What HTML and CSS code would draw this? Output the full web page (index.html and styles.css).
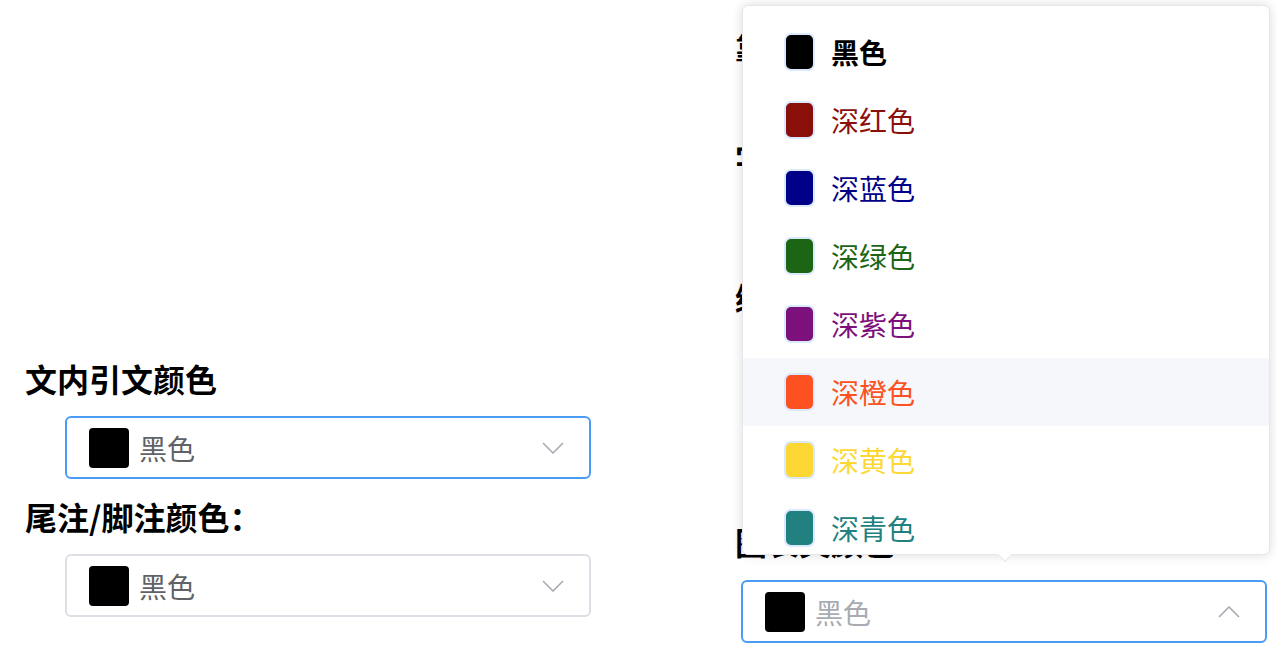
FILE: index.html
```html
<!DOCTYPE html>
<html lang="zh-CN">
<head>
<meta charset="utf-8">
<title>颜色设置</title>
<link rel="stylesheet" href="styles.css">
</head>
<body>
<div class="page">
  <div class="col col-left">
    <div class="field">
      <div class="label">文内引文颜色</div>
      <div class="select is-focus">
        <span class="swatch sw-black"></span>
        <span class="value">黑色</span>
        <svg class="caret" viewBox="0 0 22 12" width="22" height="12"><path d="M1 1 L11 11 L21 1"/></svg>
      </div>
    </div>
    <div class="field">
      <div class="label">尾注/脚注颜色：</div>
      <div class="select">
        <span class="swatch sw-black"></span>
        <span class="value">黑色</span>
        <svg class="caret" viewBox="0 0 22 12" width="22" height="12"><path d="M1 1 L11 11 L21 1"/></svg>
      </div>
    </div>
  </div>
  <div class="col col-right">
    <div class="field">
      <div class="label">靠左对齐</div>
      <div class="spacer spacer-a"></div>
    </div>
    <div class="field">
      <div class="label">字号大小</div>
      <div class="spacer spacer-b"></div>
    </div>
    <div class="field field-c">
      <div class="label">编号格式</div>
      <div class="spacer spacer-b"></div>
    </div>
    <div class="field">
      <div class="label">图表文颜色</div>
      <div class="select is-focus is-open">
        <span class="swatch sw-black"></span>
        <span class="value">黑色</span>
        <svg class="caret" viewBox="0 0 22 12" width="22" height="12"><path d="M1 11 L11 1 L21 11"/></svg>
      </div>
    </div>
  </div>
</div>

<div class="dropdown">
  <ul class="options">
    <li class="option selected"><span class="opt-swatch sw-black"></span><span class="opt-text c-black">黑色</span></li>
    <li class="option"><span class="opt-swatch sw-red"></span><span class="opt-text c-red">深红色</span></li>
    <li class="option"><span class="opt-swatch sw-blue"></span><span class="opt-text c-blue">深蓝色</span></li>
    <li class="option"><span class="opt-swatch sw-green"></span><span class="opt-text c-green">深绿色</span></li>
    <li class="option"><span class="opt-swatch sw-purple"></span><span class="opt-text c-purple">深紫色</span></li>
    <li class="option hover"><span class="opt-swatch sw-orange"></span><span class="opt-text c-orange">深橙色</span></li>
    <li class="option"><span class="opt-swatch sw-yellow"></span><span class="opt-text c-yellow">深黄色</span></li>
    <li class="option"><span class="opt-swatch sw-teal"></span><span class="opt-text c-teal">深青色</span></li>
  </ul>
  <span class="arrow"></span>
</div>
</body>
</html>
```

FILE: styles.css
```css
* { box-sizing: border-box; }
html, body { margin: 0; padding: 0; background: #fff; }
body {
  font-family: "Noto Sans CJK SC", "Noto Sans", sans-serif;
  color: #000;
  width: 1277px;
  height: 647px;
  overflow: hidden;
  position: relative;
}
.page {
  display: grid;
  grid-template-columns: 710px 542px;
  padding-left: 25px;
}
.col-left { padding-top: 358px; }
.col-right { padding-top: 27px; }

.field { margin-bottom: 17px; }
.spacer-a { height: 35px; }
.spacer-b { height: 63px; }
.field-c { margin-bottom: 122px; }

.label {
  font-size: 32px;
  font-weight: 700;
  line-height: 40px;
  height: 40px;
  white-space: nowrap;
  margin-bottom: 18px;
}

.select {
  margin-left: 40px;
  width: 526px;
  height: 63px;
  border: 2px solid #dcdfe6;
  border-radius: 6px;
  display: flex;
  align-items: center;
  padding: 0 25px 0 22px;
  background: #fff;
}
.col-right .label { margin-bottom: 19px; }
.col-right .select { margin-left: 6px; }
.select.is-focus { border-color: #4a9bf6; }
.swatch {
  width: 40px;
  height: 40px;
  border-radius: 4px;
  flex: none;
}
.value {
  margin-left: 10px;
  font-size: 28px;
  line-height: 40px;
  color: #606266;
  flex: 1;
}
.is-open .value { color: #a8abb2; }
.caret {
  flex: none;
  fill: none;
  stroke: #a8abb2;
  stroke-width: 1.6;
}

.sw-black { background: #000; }
.sw-red { background: #8a0f0b; }
.sw-blue { background: #000088; }
.sw-green { background: #1b6515; }
.sw-purple { background: #7c117c; }
.sw-orange { background: #fd5121; }
.sw-yellow { background: #fdd835; }
.sw-teal { background: #208180; }

.c-black { color: #000; }
.c-red { color: #8a0f0b; }
.c-blue { color: #000088; }
.c-green { color: #1b6515; }
.c-purple { color: #7c117c; }
.c-orange { color: #fd5121; }
.c-yellow { color: #fdd835; }
.c-teal { color: #208180; }

.dropdown {
  position: absolute;
  left: 742px;
  top: 5px;
  width: 528px;
  height: 550px;
  background: #fff;
  border: 1px solid #e4e7ed;
  border-radius: 6px;
  box-shadow: 0 0 12px rgba(0, 0, 0, 0.14);
}
.options {
  list-style: none;
  margin: 0;
  padding: 12px 0 0;
  height: 100%;
  overflow: hidden;
  border-radius: 6px;
}
.option {
  height: 68px;
  display: flex;
  align-items: center;
  padding-left: 41px;
}
.option.hover { background: #f5f7fa; }
.opt-swatch {
  width: 31px;
  height: 38px;
  border: 2px solid #dbe9fc;
  border-radius: 7px;
  flex: none;
}
.opt-text {
  margin-left: 16px;
  font-size: 28px;
  line-height: 40px;
}
.option.selected .opt-text { font-weight: 700; }

.arrow {
  position: absolute;
  left: 257px;
  bottom: -6px;
  width: 10px;
  height: 10px;
  background: #fff;
  border-right: 1px solid #e4e7ed;
  border-bottom: 1px solid #e4e7ed;
  transform: rotate(45deg);
}
```
